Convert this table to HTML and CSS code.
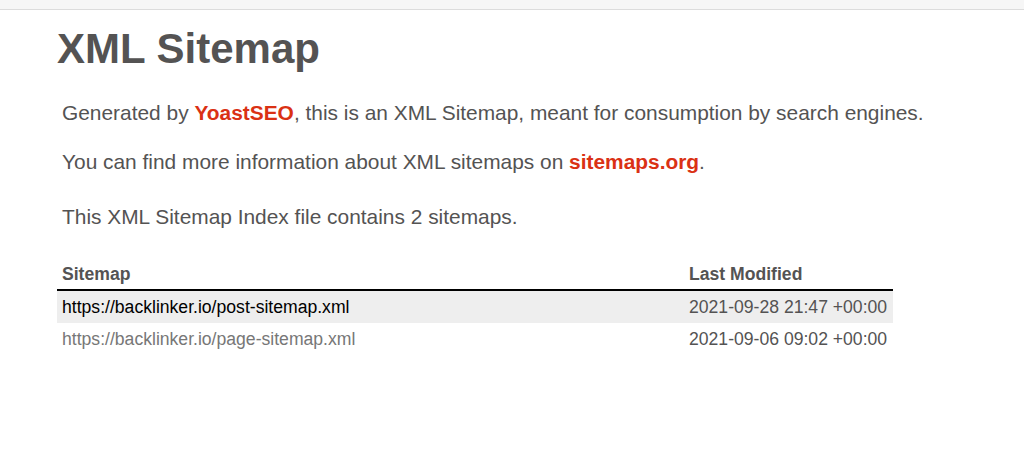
FILE: index.html
```html
<!DOCTYPE html>
<html lang="en">
<head>
<meta charset="utf-8">
<title>XML Sitemap</title>
<link rel="stylesheet" href="styles.css">
</head>
<body>
<div class="topbar"></div>
<div class="content">
  <h1 class="title">XML Sitemap</h1>
  <p class="expl">Generated by <a class="brand" href="#">YoastSEO</a>, this is an XML Sitemap, meant for consumption by search engines.</p>
  <p class="expl">You can find more information about XML sitemaps on <a class="brand" href="#">sitemaps.org</a>.</p>
  <p class="expl count">This XML Sitemap Index file contains 2 sitemaps.</p>
  <table class="sitemap">
    <thead>
      <tr><th class="col-url">Sitemap</th><th class="col-date">Last Modified</th></tr>
    </thead>
    <tbody>
      <tr class="odd"><td><a class="link" href="#">https://backlinker.io/post-sitemap.xml</a></td><td>2021-09-28 21:47 +00:00</td></tr>
      <tr><td><a class="link visited" href="#">https://backlinker.io/page-sitemap.xml</a></td><td>2021-09-06 09:02 +00:00</td></tr>
    </tbody>
  </table>
</div>
</body>
</html>
```
FILE: styles.css
```css
html, body { margin: 0; padding: 0; background: #fff; }
body {
  font-family: "Liberation Sans", Arial, Helvetica, sans-serif;
  color: #545353;
}
.topbar {
  height: 9px;
  background: #f6f6f6;
  border-bottom: 1px solid #dcdcdc;
}
.content {
  padding-left: 57px;
}
.title {
  margin: 15px 0 0;
  font-size: 42px;
  line-height: 48px;
  font-weight: bold;
}
.expl {
  margin: 0 0 0 5px;
  font-size: 20.9px;
  line-height: 24px;
  padding: 0;
}
.title + .expl { margin-top: 28px; }
.expl + .expl { margin-top: 25px; }
.expl.count { margin-top: 31px; }
.brand {
  color: #da3114;
  font-weight: bold;
  text-decoration: none;
}
.sitemap {
  margin-top: 32px;
  border-collapse: collapse;
  width: 836px;
}
.sitemap th {
  text-align: left;
  font-size: 17.6px;
  font-weight: bold;
  padding: 3px 5px 5px;
  border-bottom: 2px solid #000;
  line-height: 20px;
}
.sitemap .col-date { width: 199px; }
.sitemap td {
  font-size: 17.6px;
  line-height: 20px;
  padding: 6px 5px 6px;
}
.sitemap tr.odd td { background: #eee; }
.link { color: #000; text-decoration: none; }
.link.visited { color: #777; }
```
